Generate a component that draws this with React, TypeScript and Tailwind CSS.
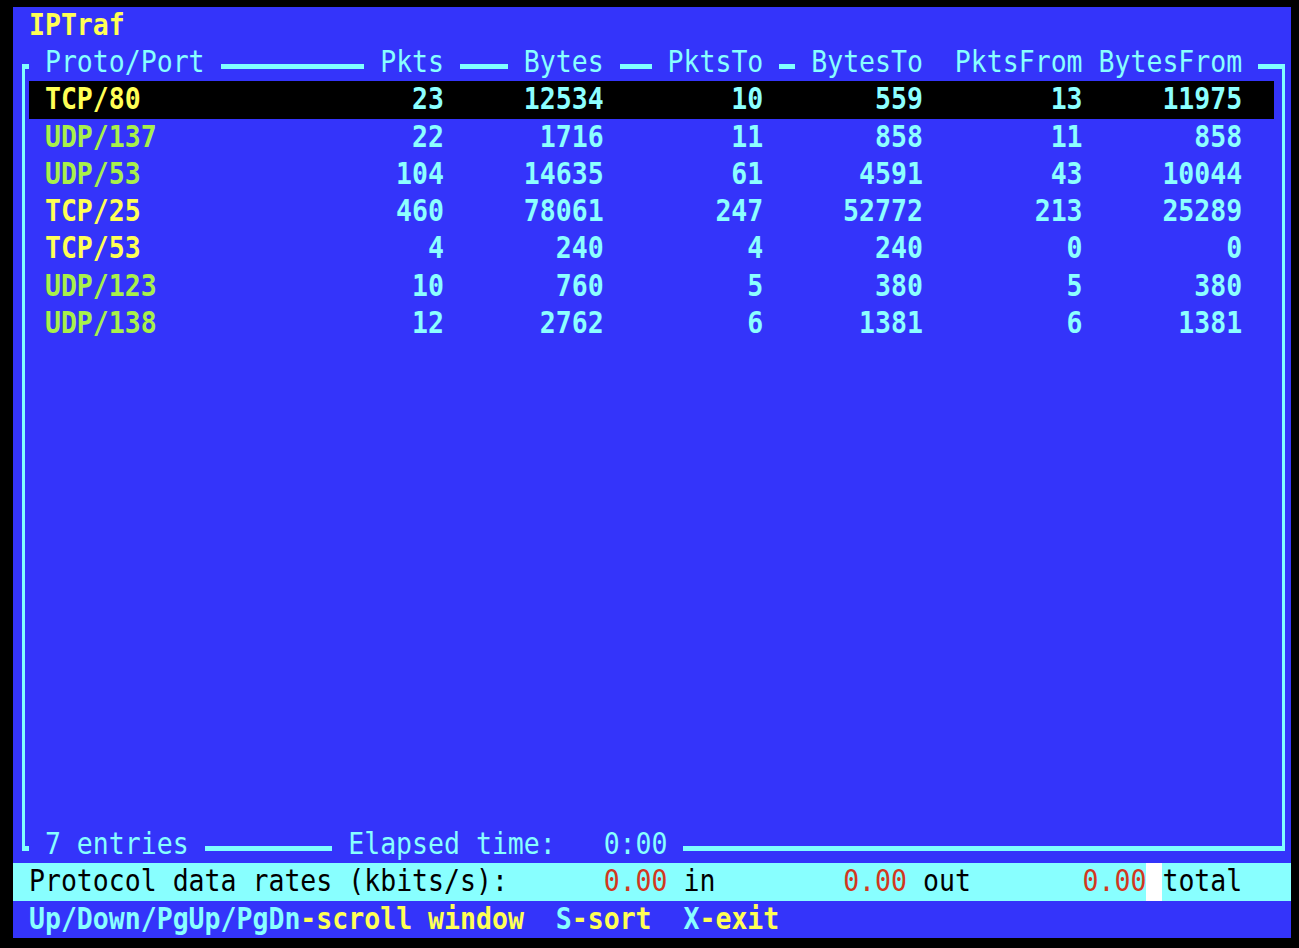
import React from "react";

type Seg = { text: string; cls: string };

const T = ({ children, className = "" }: { children: React.ReactNode; className?: string }) => (
  <span className={`whitespace-pre scale-y-[1.11] origin-[50%_30px] ${className}`}>{children}</span>
);

const L = ({ w }: { w: string }) => <span className={`mt-[20px] h-[5px] bg-[#80ffff] ${w}`} />;

const EdgeL = () => (
  <div className="flex w-[1ch] shrink-0">
    <div className="ml-[9px] w-[3px] bg-[#80ffff]" />
  </div>
);
const EdgeR = () => (
  <div className="flex w-[1ch] shrink-0">
    <div className="ml-[8px] w-[3px] bg-[#80ffff]" />
  </div>
);
const CornerTL = () => (
  <div className="flex w-[1ch] shrink-0 flex-col pt-[20px] pl-[9px]">
    <div className="h-[5px] bg-[#80ffff]" />
    <div className="w-[3px] flex-1 bg-[#80ffff]" />
  </div>
);
const CornerTR = () => (
  <div className="flex w-[1ch] shrink-0 flex-col pt-[20px]">
    <div className="h-[5px] w-[11px] bg-[#80ffff]" />
    <div className="ml-[8px] w-[3px] flex-1 bg-[#80ffff]" />
  </div>
);
const CornerBL = () => (
  <div className="flex w-[1ch] shrink-0 flex-col pl-[9px]">
    <div className="h-[20px] w-[3px] bg-[#80ffff]" />
    <div className="h-[5px] bg-[#80ffff]" />
  </div>
);
const CornerBR = () => (
  <div className="flex w-[1ch] shrink-0 flex-col">
    <div className="ml-[8px] h-[20px] w-[3px] bg-[#80ffff]" />
    <div className="h-[5px] w-[11px] bg-[#80ffff]" />
  </div>
);

const rows = [
  { p: "TCP/80", n: [23, 12534, 10, 559, 13, 11975] },
  { p: "UDP/137", n: [22, 1716, 11, 858, 11, 858] },
  { p: "UDP/53", n: [104, 14635, 61, 4591, 43, 10044] },
  { p: "TCP/25", n: [460, 78061, 247, 52772, 213, 25289] },
  { p: "TCP/53", n: [4, 240, 4, 240, 0, 0] },
  { p: "UDP/123", n: [10, 760, 5, 380, 5, 380] },
  { p: "UDP/138", n: [12, 2762, 6, 1381, 6, 1381] },
];

const BoxRow = ({
  left,
  right,
  className = "",
  children,
}: {
  left: React.ReactNode;
  right: React.ReactNode;
  className?: string;
  children?: React.ReactNode;
}) => (
  <div className="flex h-[37.24px]">
    {left}
    <div className={`flex w-[78ch] shrink-0 ${className}`}>{children}</div>
    {right}
  </div>
);

export default function App() {
  const empty = Array.from({ length: 13 });
  return (
    <div className="h-[948px] w-[1299px] bg-black pl-[13px] pt-[7px]">
      <div className="flex h-[931px] w-[1278px] flex-col overflow-hidden bg-[#3434fa] font-['DejaVu_Sans_Mono',monospace] text-[26.53px] leading-[37.24px]">
        {/* title */}
        <div className="flex h-[37.24px]">
          <T className="font-bold text-[#ffff55]">{" IPTraf"}</T>
        </div>

        {/* header */}
        <BoxRow left={<CornerTL />} right={<CornerTR />} className="text-[#88ffff]">
          <T>{" Proto/Port "}</T>
          <L w="w-[9ch]" />
          <T>{" Pkts "}</T>
          <L w="w-[3ch]" />
          <T>{" Bytes "}</T>
          <L w="w-[2ch]" />
          <T>{" PktsTo "}</T>
          <L w="w-[1ch]" />
          <T>{" BytesTo  PktsFrom BytesFrom "}</T>
          <L w="w-[1ch]" />
        </BoxRow>

        {rows.map((r, i) => (
          <BoxRow
            key={r.p}
            left={<EdgeL />}
            right={<EdgeR />}
            className={`font-bold ${i === 0 ? "bg-black" : ""}`}
          >
            <T className={r.p.startsWith("TCP") ? "text-[#ffff55]" : "text-[#a8f04a]"}>
              {" " + r.p.padEnd(15)}
            </T>
            <T className="text-[#8cffff]">{r.n.map((v) => String(v).padStart(10)).join("") + "  "}</T>
          </BoxRow>
        ))}

        {empty.map((_, i) => (
          <BoxRow key={i} left={<EdgeL />} right={<EdgeR />} />
        ))}

        {/* bottom border */}
        <BoxRow left={<CornerBL />} right={<CornerBR />} className="text-[#88ffff]">
          <T>{" 7 entries "}</T>
          <L w="w-[8ch]" />
          <T>{" Elapsed time:   0:00 "}</T>
          <L w="w-[37ch]" />
        </BoxRow>

        {/* status */}
        <div className="flex h-[37.24px] bg-[#88ffff] text-black">
          <T>{" Protocol data rates (kbits/s):      "}</T>
          <T className="text-[#d2381e]">0.00</T>
          <T>{" in        "}</T>
          <T className="text-[#d2381e]">0.00</T>
          <T>{" out       "}</T>
          <T className="text-[#d2381e]">0.00</T>
          <span className="w-[1ch] bg-white" />
          <T>total</T>
        </div>

        {/* help */}
        <div className="flex h-[37.24px] font-bold">
          <T className="text-[#88ffff]">{" Up/Down/PgUp/PgDn"}</T>
          <T className="text-[#ffff55]">{"-scroll window  "}</T>
          <T className="text-[#88ffff]">S</T>
          <T className="text-[#ffff55]">{"-sort  "}</T>
          <T className="text-[#88ffff]">X</T>
          <T className="text-[#ffff55]">-exit</T>
        </div>
      </div>
    </div>
  );
}
